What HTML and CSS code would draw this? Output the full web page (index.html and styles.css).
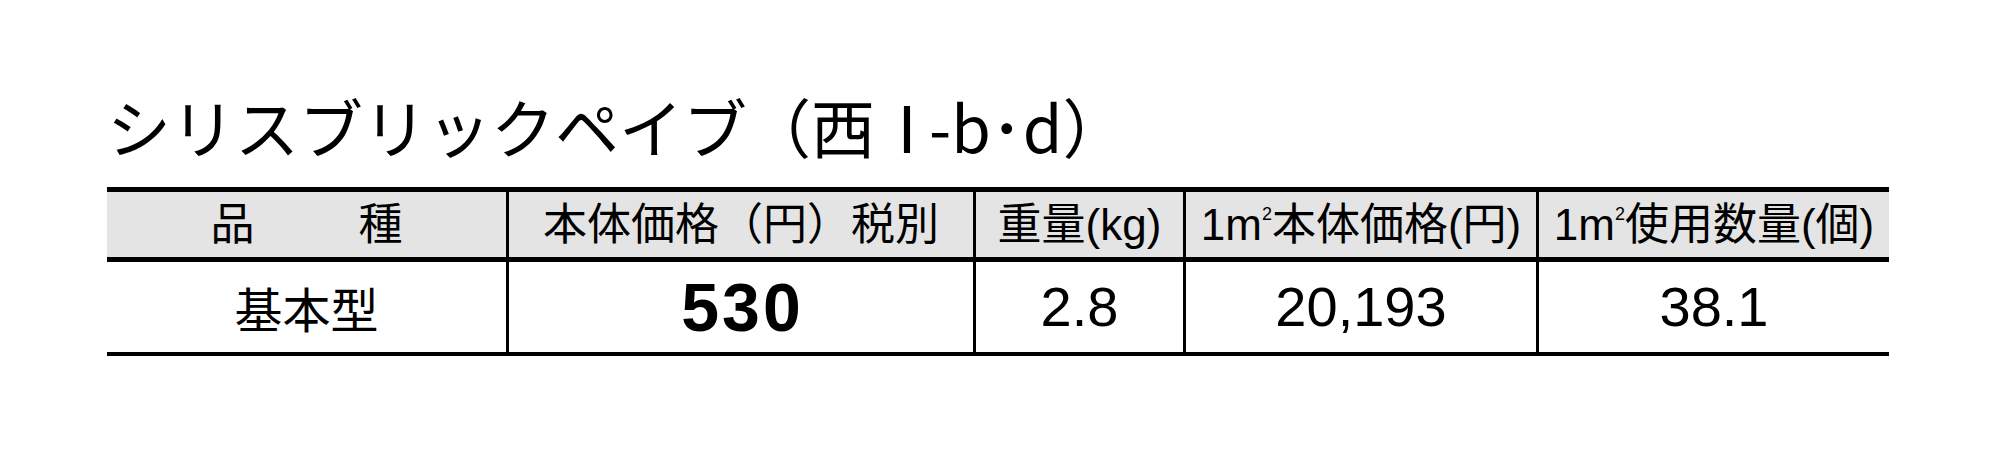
FILE: index.html
```html
<!DOCTYPE html>
<html lang="ja">
<head>
<meta charset="utf-8">
<title>シリスブリックペイブ</title>
<link rel="stylesheet" href="styles.css">
</head>
<body>
<main class="page">
  <h1 class="title">シリスブリックペイブ（西<span class="roman">Ⅰ</span>-b･d）</h1>
  <table class="spec">
    <colgroup>
      <col class="c1"><col class="c2"><col class="c3"><col class="c4"><col class="c5">
    </colgroup>
    <thead>
      <tr>
        <th><span class="spread"><span>品</span><span>種</span></span></th>
        <th>本体価格（円）税別</th>
        <th>重量(kg)</th>
        <th>1m<sup>2</sup>本体価格(円)</th>
        <th>1m<sup>2</sup>使用数量(個)</th>
      </tr>
    </thead>
    <tbody>
      <tr>
        <td class="kind">基本型</td>
        <td class="price">530</td>
        <td class="num">2.8</td>
        <td class="num">20,193</td>
        <td class="num">38.1</td>
      </tr>
    </tbody>
  </table>
</main>
</body>
</html>
```
FILE: styles.css
```css
html, body {
  margin: 0;
  padding: 0;
  background: #ffffff;
  color: #000000;
}

.page {
  padding: 93px 0 0 107px;
  width: 1782px;
}

.title {
  margin: 0;
  font-family: "Noto Sans CJK JP", sans-serif;
  font-weight: 400;
  font-size: 64px;
  line-height: 64px;
  height: 64px;
  white-space: nowrap;
  letter-spacing: 0;
}

.title .roman {
  letter-spacing: -10px;
}

.spec {
  margin-top: 30px;
  width: 1782px;
  table-layout: fixed;
  border-collapse: separate;
  border-spacing: 0;
  font-family: "Liberation Sans", "Noto Sans CJK JP", sans-serif;
}

.c1 { width: 399px; }
.c2 { width: 467px; }
.c3 { width: 210px; }
.c4 { width: 353px; }
.c5 { width: 353px; }

.spec th,
.spec td {
  padding: 0;
  text-align: center;
  vertical-align: middle;
  white-space: nowrap;
  border-left: 3px solid #000;
}

.spec th:first-child,
.spec td:first-child {
  border-left: none;
}

.spec th {
  background: #e4e4e4;
  height: 65px;
  border-top: 5px solid #000;
  border-bottom: 5px solid #000;
  font-weight: 400;
  font-size: 44px;
  line-height: 44px;
}

.spec th sup {
  font-size: 18px;
  line-height: 0;
  vertical-align: 20px;
}

.spread {
  display: inline-flex;
  gap: 104px;
}

.spec td {
  height: 90px;
  border-bottom: 4px solid #000;
  font-size: 56px;
  line-height: 56px;
}

.spec td.kind {
  font-family: "Noto Sans CJK JP", sans-serif;
  font-size: 48px;
  line-height: 48px;
}

.spec td.price {
  font-weight: 700;
  font-size: 68px;
  line-height: 68px;
  letter-spacing: 3px;
  text-indent: 3px;
}
```
